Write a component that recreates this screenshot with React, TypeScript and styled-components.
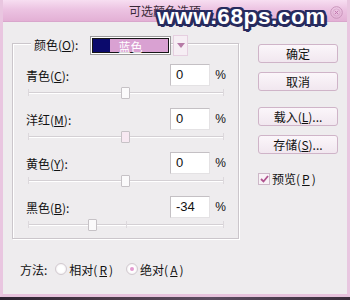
import React from "react";
import styled, { createGlobalStyle } from "styled-components";

const GlobalStyle = createGlobalStyle`
  html, body {
    margin: 0;
    padding: 0;
    background: #2e2633;
  }
  body {
    font-family: "Noto Sans CJK SC", "Liberation Sans", sans-serif;
    font-size: 12px;
    color: #111;
  }
`;

const Window = styled.div`
  position: relative;
  width: 350px;
  height: 297px;
  box-sizing: border-box;
  background: #eeecee;
  border-left: 3px solid #e9c6e0;
  border-right: 3px solid #e9c6e0;
  border-bottom: 3px solid #e6c2dc;
  display: flex;
  flex-direction: column;
  overflow: hidden;
`;

const TitleBar = styled.div`
  height: 22px;
  margin: 0 -3px;
  flex: none;
  display: flex;
  align-items: center;
  justify-content: center;
  padding-right: 20px;
  background: linear-gradient(#f7def1, #ecc3e2 45%, #e3b0d5);
  border-bottom: 1px solid #d9a6cc;
  box-sizing: border-box;
  color: #3a2a38;
  font-size: 12px;
  line-height: 1;
`;

const CloseButton = styled.div`
  position: absolute;
  right: 4px;
  top: 5px;
  width: 13px;
  height: 13px;
`;

const Watermark = styled.div`
  position: absolute;
  left: 154px;
  top: 4px;
  font-family: "Liberation Sans", Arial, sans-serif;
  font-weight: bold;
  font-size: 22.5px;
  line-height: 26px;
  color: #ffffff;
  letter-spacing: 0.6px;
  text-shadow: 2px 0 0 #272b5e, -2px 0 0 #272b5e, 0 2px 0 #272b5e,
    0 -2px 0 #272b5e, 2px 2px 0 #272b5e, -2px -2px 0 #272b5e,
    2px -2px 0 #272b5e, -2px 2px 0 #272b5e, 1px 3px 0 #272b5e,
    3px 1px 0 #272b5e;
`;

const Body = styled.div`
  display: flex;
  gap: 19px;
  padding-left: 9px;
`;

const LeftColumn = styled.div`
  width: 227px;
  display: flex;
  flex-direction: column;
`;

const GroupBox = styled.div`
  margin-top: 21px;
  height: 196px;
  box-sizing: border-box;
  border: 1px solid #cbc6cb;
  box-shadow: inset 1px 1px 0 #ffffff, 1px 1px 0 #ffffff;
  padding: 0 12px 0 13px;
  display: flex;
  flex-direction: column;
`;

const Legend = styled.div`
  margin-top: -9px;
  margin-left: 5px;
  height: 20px;
  display: flex;
  align-items: center;
`;

const LegendLabel = styled.span`
  background: #eeecee;
  padding: 0 12px 0 3px;
  height: 14px;
  line-height: 14px;
`;

const Key = styled.span`
  text-decoration: underline;
  text-underline-offset: 1px;
`;

const ColorSelect = styled.div`
  width: 81px;
  height: 19px;
  box-sizing: border-box;
  border: 1px solid #9c9a9c;
  background: #ffffff;
  padding: 1px;
  display: flex;
`;

const SelectInner = styled.div`
  flex: 1;
  display: flex;
  border: 1px solid #151515;
`;

const Swatch = styled.div`
  width: 17px;
  background: #0b0a6c;
`;

const SelectedText = styled.div`
  flex: 1;
  background: #d9a1d2;
  color: #ffffff;
  padding-left: 8px;
  line-height: 15px;
  font-size: 12px;
`;

const ArrowButton = styled.div`
  width: 15px;
  height: 21px;
  margin-left: 2px;
  box-sizing: border-box;
  border: 1px solid #e6cfe0;
  background: #f6eef4;
  display: flex;
  align-items: center;
  justify-content: center;
`;

const Rows = styled.div`
  margin-top: 9px;
  display: flex;
  flex-direction: column;
  gap: 2px;
`;

const Row = styled.div`
  display: flex;
  flex-direction: column;
`;

const InputRow = styled.div`
  height: 22px;
  display: flex;
  align-items: center;
`;

const RowLabel = styled.span`
  flex: 1;
`;

const ValueBox = styled.div`
  width: 40px;
  height: 22px;
  box-sizing: border-box;
  border: 1px solid #c4c0c4;
  border-right-color: #e4e2e4;
  border-bottom-color: #e4e2e4;
  background: #ffffff;
  padding-left: 5px;
  line-height: 20px;
  font-family: "Liberation Sans", Arial, sans-serif;
  font-size: 13px;
`;

const Percent = styled.span`
  width: 16px;
  text-align: right;
  font-family: "Liberation Sans", Arial, sans-serif;
  font-size: 12px;
`;

const SliderArea = styled.div`
  position: relative;
  height: 20px;
  margin: 0 2px;
`;

const Track = styled.div`
  position: absolute;
  left: 0;
  right: 0;
  top: 6px;
  height: 1px;
  background: #d4d0d4;
  border-bottom: 1px solid #ffffff;
`;

const Tick = styled.div`
  position: absolute;
  top: 3px;
  width: 1px;
  height: 7px;
  background: #dcd8dc;
`;

const Thumb = styled.div<{ $hot?: boolean }>`
  position: absolute;
  top: 1px;
  width: 9px;
  height: 12px;
  margin-left: -5px;
  box-sizing: border-box;
  border: 1px solid #c6c2c6;
  background: ${(p) => (p.$hot ? "#f7e9f2" : "#fbfafb")};
  border-radius: 1px;
`;

const MethodRow = styled.div`
  margin-top: 22px;
  height: 16px;
  display: flex;
  align-items: center;
  padding-left: 8px;
`;

const MethodLabel = styled.span`
  margin-right: 8px;
`;

const RadioOption = styled.label`
  display: flex;
  align-items: center;
  gap: 2px;
  margin-right: 13px;
`;

const RadioCircle = styled.span<{ $checked?: boolean }>`
  width: 12px;
  height: 12px;
  box-sizing: border-box;
  border-radius: 50%;
  border: 1px solid #d2cad0;
  background: radial-gradient(#ffffff 45%, #e8e2e6);
  display: flex;
  align-items: center;
  justify-content: center;
  &::after {
    content: "";
    width: 4px;
    height: 4px;
    border-radius: 50%;
    background: ${(p) => (p.$checked ? "#e49ad0" : "transparent")};
  }
`;

const RightColumn = styled.div`
  width: 80px;
  margin-top: 22px;
  display: flex;
  flex-direction: column;
`;

const Button = styled.div<{ $gap?: number }>`
  height: 19px;
  margin-bottom: ${(p) => p.$gap ?? 9}px;
  box-sizing: border-box;
  border: 1px solid #cfb4c8;
  border-radius: 3px;
  background: linear-gradient(#fbf6fa, #f1e7ef);
  display: flex;
  align-items: center;
  justify-content: center;
  line-height: 1;
`;

const CheckRow = styled.label`
  display: flex;
  align-items: center;
  gap: 2px;
`;

const CheckBox = styled.span`
  width: 12px;
  height: 12px;
  box-sizing: border-box;
  border: 1px solid #cdb8c8;
  background: #f8f2f6;
  display: flex;
  align-items: center;
  justify-content: center;
`;

const BottomStrip = styled.div`
  height: 3px;
  background: linear-gradient(90deg, #2b2230, #4a3a48 30%, #5b4c60 60%, #3a2e3c);
`;

interface SliderRowProps {
  label: string;
  keyChar: string;
  value: number;
  hot?: boolean;
}

const SliderRow = ({ label, keyChar, value, hot }: SliderRowProps) => {
  const pos = 50 + value / 2;
  return (
    <Row>
      <InputRow>
        <RowLabel>
          {label}(<Key>{keyChar}</Key>):
        </RowLabel>
        <ValueBox>{value}</ValueBox>
        <Percent>%</Percent>
      </InputRow>
      <SliderArea>
        <Track />
        <Tick style={{ left: 0 }} />
        <Tick style={{ left: "50%" }} />
        <Tick style={{ right: 0 }} />
        <Thumb $hot={hot} style={{ left: `${pos}%` }} />
      </SliderArea>
    </Row>
  );
};

export default function App() {
  return (
    <>
      <GlobalStyle />
      <Window>
        <TitleBar>可选颜色选项</TitleBar>
        <CloseButton>
          <svg width="13" height="13" viewBox="0 0 13 13">
            <circle cx="6.5" cy="6.5" r="5.8" fill="none" stroke="#c894ba" strokeWidth="1" />
            <circle cx="6.5" cy="6.5" r="3.6" fill="none" stroke="#d6a8ca" strokeWidth="0.8" />
            <path d="M4.8 4.8 L8.2 8.2 M8.2 4.8 L4.8 8.2" stroke="#c07aae" strokeWidth="1" />
          </svg>
        </CloseButton>
        <Body>
          <LeftColumn>
            <GroupBox>
              <Legend>
                <LegendLabel>
                  颜色(<Key>O</Key>):
                </LegendLabel>
                <ColorSelect>
                  <SelectInner>
                    <Swatch />
                    <SelectedText>蓝色</SelectedText>
                  </SelectInner>
                </ColorSelect>
                <ArrowButton>
                  <svg width="8" height="5" viewBox="0 0 8 5">
                    <path d="M0 0 H8 L4 5 Z" fill="#b67aa6" />
                  </svg>
                </ArrowButton>
              </Legend>
              <Rows>
                <SliderRow label="青色" keyChar="C" value={0} />
                <SliderRow label="洋红" keyChar="M" value={0} hot />
                <SliderRow label="黄色" keyChar="Y" value={0} />
                <SliderRow label="黑色" keyChar="B" value={-34} />
              </Rows>
            </GroupBox>
            <MethodRow>
              <MethodLabel>方法:</MethodLabel>
              <RadioOption>
                <RadioCircle />
                相对(<Key>R</Key>)
              </RadioOption>
              <RadioOption>
                <RadioCircle $checked />
                绝对(<Key>A</Key>)
              </RadioOption>
            </MethodRow>
          </LeftColumn>
          <RightColumn>
            <Button>确定</Button>
            <Button $gap={16}>取消</Button>
            <Button>
              载入(<Key>L</Key>)...
            </Button>
            <Button $gap={16}>
              存储(<Key>S</Key>)...
            </Button>
            <CheckRow>
              <CheckBox>
                <svg width="9" height="8" viewBox="0 0 9 8">
                  <path d="M1 4 L3.5 6.5 L8 1" fill="none" stroke="#b0538f" strokeWidth="1.8" />
                </svg>
              </CheckBox>
              预览(<Key>P</Key>)
            </CheckRow>
          </RightColumn>
        </Body>
        <Watermark>www.68ps.com</Watermark>
      </Window>
      <BottomStrip />
    </>
  );
}
